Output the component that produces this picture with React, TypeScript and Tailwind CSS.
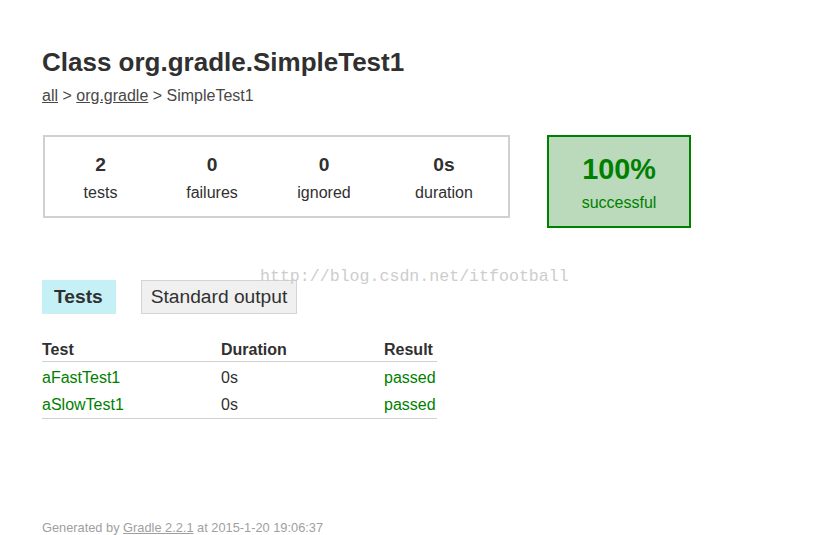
const counters = [
    { value: "2", label: "tests", width: "w-[111px]" },
    { value: "0", label: "failures", width: "w-[112px]" },
    { value: "0", label: "ignored", width: "w-[112px]" },
    { value: "0s", label: "duration", width: "flex-1" },
];

const tests = [
    { name: "aFastTest1", duration: "0s", result: "passed" },
    { name: "aSlowTest1", duration: "0s", result: "passed" },
];

function App() {
    return (
        <div className="relative w-[815px] h-[535px] overflow-hidden bg-white text-[#303030] font-['Liberation_Sans',Arial,sans-serif] px-[42px] pt-[47px]">
            <h1 className="text-[26px] leading-[30px] font-bold">Class org.gradle.SimpleTest1</h1>

            <div className="mt-[10px] text-[16px] leading-[18px] text-[#484848]">
                <a className="underline">all</a> &gt; <a className="underline">org.gradle</a> &gt; SimpleTest1
            </div>

            {/* summary */}
            <div className="mt-[30px] flex items-start">
                <div className="w-[467px] flex border-2 border-[#d0d0d0] ml-px">
                    {counters.map((c, i) => (
                        <div key={i} className={`${c.width} text-center pt-[17px] pb-[14px]`}>
                            <div className="text-[19.2px] leading-[22px] font-bold mb-[8px]">{c.value}</div>
                            <div className="text-[16px] leading-[18px]">{c.label}</div>
                        </div>
                    ))}
                </div>
                <div className="ml-[37px] w-[144px] border-2 border-[#008000] bg-[#bbd9bb] text-[#008000] text-center pt-[16px] pb-[14px]">
                    <div className="text-[28.8px] leading-[33px] font-bold mb-[8px]">100%</div>
                    <div className="text-[16px] leading-[18px]">successful</div>
                </div>
            </div>

            {/* tabs */}
            <div className="mt-[52px] flex gap-[25px]">
                <div className="border border-[#c5f0f5] bg-[#c5f0f5] pl-[11px] pr-[12px] py-[5px] text-[19.2px] leading-[22px] font-bold">Tests</div>
                <div className="border border-[#d4d4d4] bg-[#f0f0f0] px-[9px] py-[5px] text-[19.2px] leading-[22px]">Standard output</div>
            </div>

            {/* tests table */}
            <div className="mt-[27px] w-[395px] text-[16px] leading-[18px]">
                <div className="flex font-bold pb-[2px] border-b border-[#d0d0d0]">
                    <div className="w-[179px]">Test</div>
                    <div className="w-[163px]">Duration</div>
                    <div className="flex-1">Result</div>
                </div>
                <div className="border-b border-[#d0d0d0] pb-[2px]">
                    {tests.map((t) => (
                        <div key={t.name} className="flex pt-[7px] pb-[2px]">
                            <div className="w-[179px] text-[#008000]">{t.name}</div>
                            <div className="w-[163px]">{t.duration}</div>
                            <div className="flex-1 text-[#008000]">{t.result}</div>
                        </div>
                    ))}
                </div>
            </div>

            <div className="mt-[101px] text-[12.8px] leading-[15px] text-[#a0a0a0] whitespace-nowrap">
                Generated by <a className="underline">Gradle 2.2.1</a> at 2015-1-20 19:06:37
            </div>

            {/* watermark */}
            <div className="absolute left-[260px] top-[267px] font-['Liberation_Mono',monospace] text-[16.6px] leading-[20px] text-[#cdcdcd] pointer-events-none">
                http://blog.csdn.net/itfootball
            </div>
        </div>
    );
}

export default App;
